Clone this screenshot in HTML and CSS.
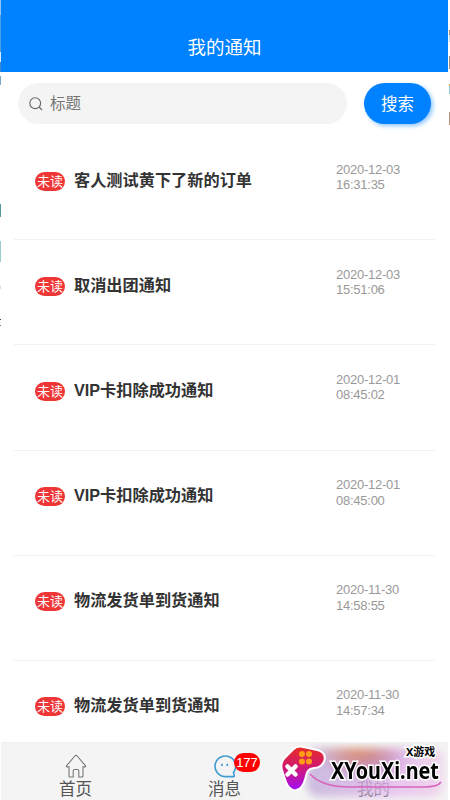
FILE: index.html
```html
<!DOCTYPE html>
<html lang="zh-CN">
<head>
<meta charset="utf-8">
<title>我的通知</title>
<link rel="stylesheet" href="styles.css">
</head>
<body>
<div class="page">
  <header class="header"><h1 class="title">我的通知</h1></header>
  <div class="search">
    <div class="field">
      <svg class="search-icon" viewBox="0 0 14 14"><circle cx="6.2" cy="6.2" r="5.4"/><path d="M10.2 10.2 13 13"/></svg>
      <span>标题</span>
    </div>
    <button class="search-btn">搜索</button>
  </div>
  <main class="list">
    <article class="item"><span class="tag">未读</span><h2 class="name">客人测试黄下了新的订单</h2><time class="time">2020-12-03<br>16:31:35</time></article>
    <article class="item"><span class="tag">未读</span><h2 class="name">取消出团通知</h2><time class="time">2020-12-03<br>15:51:06</time></article>
    <article class="item"><span class="tag">未读</span><h2 class="name">VIP卡扣除成功通知</h2><time class="time">2020-12-01<br>08:45:02</time></article>
    <article class="item"><span class="tag">未读</span><h2 class="name">VIP卡扣除成功通知</h2><time class="time">2020-12-01<br>08:45:00</time></article>
    <article class="item"><span class="tag">未读</span><h2 class="name">物流发货单到货通知</h2><time class="time">2020-11-30<br>14:58:55</time></article>
    <article class="item"><span class="tag">未读</span><h2 class="name">物流发货单到货通知</h2><time class="time">2020-11-30<br>14:57:34</time></article>
  </main>
  <nav class="tabs">
    <a class="tab">
      <svg class="tab-icon home" viewBox="0 0 24 24"><path d="M2.6 11.7 10.8 2q1.2-1.3 2.4 0l8.2 9.7q.8 1.1-.6 1.2H19V22q0 1-1 1h-3.2v-6.2q0-1.3-1.2-1.3h-3.2q-1.2 0-1.2 1.3V23H6q-1 0-1-1v-9.1H3.2q-1.4-.1-.6-1.2Z"/></svg>
      <span class="tab-label">首页</span>
    </a>
    <a class="tab">
      <svg class="tab-icon chat" viewBox="0 0 24 24"><path d="M20.5 18.6A10.3 10.3 0 1 0 12 22.6h8.7q.8-.2.6-1Z"/><path class="eyes" d="M9 9.8v2.2M14.3 9.8v2.2"/></svg>
      <span class="badge">177</span>
      <span class="tab-label">消息</span>
    </a>
    <a class="tab">
      <span class="tab-icon"></span>
      <span class="tab-label">我的</span>
    </a>
    <div class="watermark">
      <div class="haze"></div>
      <svg class="wire" viewBox="0 0 140 25"><path d="M6 1Q18 14 46 14H120Q134 14 137 9"/></svg>
      <svg class="pad" viewBox="0 0 48 50">
        <defs><linearGradient id="g" x1="0" y1="0" x2="0" y2="1"><stop offset="0" stop-color="#e52b25"/><stop offset=".5" stop-color="#d01878"/><stop offset="1" stop-color="#a20df0"/></linearGradient></defs>
        <path class="pad-body" fill="url(#g)" d="M15 5Q19 1.500 24 3L38 6Q46 8 44.500 15Q42 22 35 22L31 23Q27 25 26 31Q23 44 16 44.500Q11 44 8 37L4 25Q2 19 6 14Z"/>
        <g fill="#ff9d16"><circle cx="23" cy="9" r="3"/><circle cx="30" cy="9" r="3"/><circle cx="23" cy="16.500" r="3"/><circle cx="30" cy="16.500" r="3"/></g>
        <path class="pad-x" d="m8.500 21.500 8 8m0-8-8 8"/>
      </svg>
      <span class="wm-small">X游戏</span>
      <span class="wm-main">XYouXi.net</span>
    </div>
  </nav>
</div>
</body>
</html>
```
FILE: styles.css
```css
* { box-sizing: border-box; }
body { margin: 0; background: #fff; font-family: "Liberation Sans", "Noto Sans CJK SC", sans-serif; }
.page {
  width: 450px; height: 800px; padding: 0 2px 0 1px; overflow: hidden; display: flex; flex-direction: column;
  background:
    linear-gradient(180deg, #8fc6f0 0 15px, #4a9fe0 15px 52px, #d8ecfa 52px 62px, #3a86cc 62px 72px, #fff 72px 76px, #79a9c4 76px 85px, #fff 85px 204px, #55989c 204px 217px, #fff 217px 241px, #9fcaca 241px 262px, #fff 262px 286px, #ddd 286px 289px, #fff 289px 319px, #444 319px 320px, #fff 320px 325px, #777 325px 326px, #fff 326px) 0 0 / 1px 100% no-repeat,
    linear-gradient(180deg, #fff 0 30px, #a88e78 30px 35px, #b8d9ec 35px 42px, #fff 42px 56px, #a98e80 56px 69px, #fff 69px 84px, #d6a35c 84px 86px, #8fd0d8 86px 94px, #fff 94px 112px, #ba9878 112px 125px, #fff 125px) 100% 0 / 1px 100% no-repeat;
}
.header { height: 72px; flex: none; background: #0081ff; display: flex; align-items: flex-end; justify-content: center; padding-bottom: 11px; }
.title { margin: 0; color: #fff; font-size: 18.5px; line-height: 27px; font-weight: 400; }
.search { height: 63px; flex: none; display: flex; align-items: center; padding: 0 17px; gap: 17px; }
.field { flex: 1; height: 41px; border-radius: 21px; background: #f4f4f4; display: flex; align-items: center; padding-left: 11px; gap: 7px; color: #777; font-size: 15.5px; line-height: 24px; }
.search-icon { width: 14px; height: 14px; fill: none; stroke: #666; stroke-width: 1.1; }
.search-btn { width: 67px; height: 41px; border: 0; border-radius: 21px; background: #0081ff; box-shadow: 2px 2px 4px rgba(0, 129, 255, .45); color: #fff; font: 16.5px/24px "Liberation Sans", "Noto Sans CJK SC", sans-serif; padding: 0; }
.list { flex: 1; min-height: 0; overflow: hidden; padding: 0 13px; }
.item { height: 105.2px; border-bottom: 1px solid #f1f1f1; display: flex; align-items: flex-start; padding: 26.5px 0 0 21px; }
.tag { width: 30px; height: 19px; margin-top: 10px; flex: none; border-radius: 10px; background: #ee3636; color: #fff; font-size: 13px; line-height: 19px; text-align: center; white-space: nowrap; }
.name { margin: 6px 0 0 9px; width: 262px; flex: none; color: #333; font-size: 16.2px; line-height: 24px; font-weight: 700; }
.time { color: #999; font-size: 13px; line-height: 15.5px; letter-spacing: -.25px; white-space: nowrap; }
.tabs { position: relative; height: 58px; flex: none; background: #f4f4f4; border-top: 1px solid #efefef; display: flex; }
.tab { position: relative; flex: 1; display: flex; flex-direction: column; align-items: center; padding-top: 11px; color: #555; }
.tab-icon { width: 24px; height: 24px; flex: none; fill: none; stroke: #777; stroke-width: 1.1; }
.chat { stroke: #419bd0; stroke-width: 1.6; }
.tab-label { font-size: 16.5px; line-height: 22px; }
.badge { position: absolute; left: 84px; top: 10px; width: 26px; height: 19px; border-radius: 10px; background: #f00; color: #fff; font-size: 13px; line-height: 19px; text-align: center; }
.watermark { position: absolute; left: 276px; top: 0; width: 171px; height: 57px; overflow: hidden; }
.haze {
  position: absolute; left: 30px; top: 5px; width: 136px; height: 49px; border-radius: 12px; filter: blur(4px);
  background:
    radial-gradient(ellipse at 38% 4%, rgba(225, 145, 85, .8), transparent 36%),
    radial-gradient(ellipse at 45% 22%, rgba(165, 95, 180, .65), transparent 45%),
    linear-gradient(90deg, rgba(188, 166, 215, .75), rgba(226, 184, 236, .8) 60%, rgba(238, 205, 232, .8));
}
.pad { position: absolute; left: 2px; top: 2px; width: 48px; height: 50px; overflow: visible; }
.pad-body { stroke: #fff; stroke-width: 4; paint-order: stroke; }
.pad-x { fill: none; stroke: #fff; stroke-width: 4.5; stroke-linecap: round; }
.wire { position: absolute; left: 27px; top: 30px; width: 140px; height: 25px; fill: none; stroke: #d864bd; stroke-width: 1.5; }
.wm-small, .wm-main { position: absolute; color: #000; white-space: nowrap; font-family: "Noto Sans", "Noto Sans CJK SC", sans-serif; font-weight: 700; -webkit-text-stroke: 3px #fff; paint-order: stroke fill; }
.wm-small { left: 129px; top: 1px; font-size: 11px; line-height: 16px; }
.wm-main { left: 54px; top: 14px; font-size: 22.5px; line-height: 28px; transform: scaleX(.88); transform-origin: 0 50%; }
```
